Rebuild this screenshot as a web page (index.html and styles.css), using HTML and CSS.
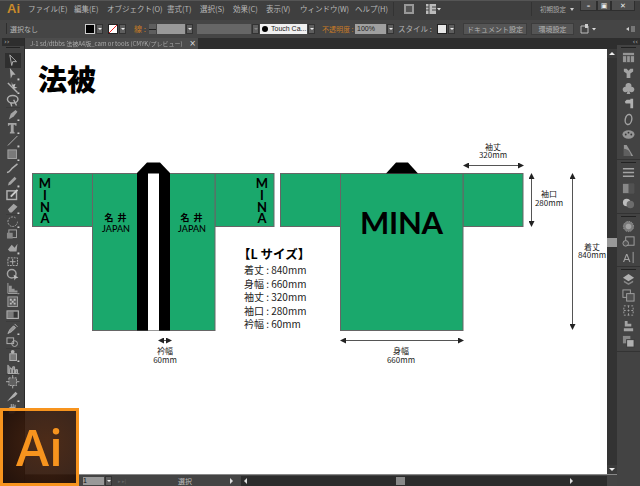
FILE: index.html
```html
<!doctype html>
<html>
    <head>
        <meta charset="utf-8">
        <title>Ai</title>
        <link rel="stylesheet" href="styles.css">
    </head>
    <body>
        <div class="app">
            <div class="menubar">
                <span class="appName">Ai</span>
                <span class="menu m1">ファイル(E)</span>
                <span class="menu m2">編集(E)</span>
                <span class="menu m3">オブジェクト(O)</span>
                <span class="menu m4">書式(T)</span>
                <span class="menu m5">選択(S)</span>
                <span class="menu m6">効果(C)</span>
                <span class="menu m7">表示(V)</span>
                <span class="menu m8">ウィンドウ(W)</span>
                <span class="menu m9">ヘルプ(H)</span>
                <span class="vline"></span>
                <svg class="barIcon" width="12" height="12" viewBox="0 0 12 12"><rect x="1" y="1" width="10" height="10" fill="#999"/><rect x="3" y="3" width="6" height="6" fill="#555"/></svg>
                <svg class="barIcon wide" width="16" height="12" viewBox="0 0 16 12"><rect x="1" y="1" width="10" height="10" fill="#bbb"/><path d="M4 1v10M1 4h3M1 7h3M7 4h4M7 7h4" stroke="#444"/><path d="M12 5h4l-2 2.500z" fill="#ddd"/></svg>
                <span class="spring"></span>
                <span class="vline"></span>
                <span class="workspace">初期設定</span>
                <span class="caret small"></span>
                <div class="winButtons">
                    <span class="winBtn">&#8211;</span>
                    <span class="winBtn restore">&#9635;</span>
                    <span class="winBtn close">&#10005;</span>
                </div>
            </div>

            <div class="controlbar">
                <span class="grip"></span>
                <span class="label none">選択なし</span>
                <span class="swatch black"></span><span class="drop"></span>
                <span class="swatch noFill"></span><span class="drop"></span>
                <span class="label orange stroke">線 :</span>
                <span class="spinner"></span>
                <span class="field strokeField"></span><span class="drop"></span>
                <span class="field dim"></span><span class="drop faded"></span>
                <span class="field brush"><i class="dot"></i>Touch Ca...</span><span class="drop"></span>
                <span class="label orange opacity">不透明度 :</span>
                <span class="field percent">100%</span><span class="drop"></span>
                <span class="label styleLabel">スタイル :</span>
                <span class="swatch pale"></span><span class="drop"></span>
                <span class="button docSetup">ドキュメント設定</span>
                <span class="button prefs">環境設定</span>
                <svg class="barIcon arrange" width="18" height="12" viewBox="0 0 18 12"><path d="M2 3h7v7H2z" fill="none" stroke="#bbb"/><path d="M6 1h3v4H6z" fill="#ccc"/><path d="M13 5h4l-2 2.500z" fill="#ddd"/></svg>
                <svg class="barIcon panelMenu" width="10" height="10" viewBox="0 0 10 10"><path d="M0 5l3-2v4z" fill="#ccc"/><path d="M5 2h4v6H5z" fill="#777"/></svg>
            </div>

            <div class="workarea">
                <div class="tools">
                    <div class="panelHead">&#8250;&#8250;</div>
                    <div class="handle"></div>
                    <div class="toolList">
                        <svg class="tool current" viewBox="0 0 14 14"><path d="M4 1l7 7H7l-1 4z" fill="none" stroke="#ccc"/></svg>
                        <svg class="tool" viewBox="0 0 14 14"><path d="M4 1l6 7H7l-2 4z" fill="#ccc"/><rect x="12" y="12" width="2" height="2" fill="#eee"/></svg>
                        <svg class="tool" viewBox="0 0 14 14"><path d="M2 2l10 10" stroke="#ccc" stroke-width="1.500"/><path d="M6 1l1 3 3-1-1 3 3 1-4 1-2-4z" fill="#ddd"/><rect x="12" y="12" width="2" height="2" fill="#eee"/></svg>
                        <svg class="tool" viewBox="0 0 14 14"><ellipse cx="7" cy="5.500" rx="5.500" ry="4" fill="none" stroke="#ccc" stroke-width="1.500"/><path d="M5 9l1 4M8 6l3 6" stroke="#ccc" stroke-width="1.500"/></svg>
                        <svg class="tool sep" viewBox="0 0 14 14"><path d="M3 12l2-6 5-4 2 2-4 5z" fill="#bbb"/><rect x="12" y="12" width="2" height="2" fill="#eee"/></svg>
                        <svg class="tool" viewBox="0 0 14 14"><path d="M2 2h9v3h-1l-1-1H8v7l1 1v1H4v-1l1-1V4H4L3 5H2z" fill="#bbb"/><rect x="12" y="12" width="2" height="2" fill="#eee"/></svg>
                        <svg class="tool" viewBox="0 0 14 14"><path d="M2 12L12 2" stroke="#ccc"/><rect x="12" y="12" width="2" height="2" fill="#eee"/></svg>
                        <svg class="tool" viewBox="0 0 14 14"><rect x="2" y="2" width="9" height="9" fill="#888" stroke="#bbb"/><rect x="12" y="12" width="2" height="2" fill="#eee"/></svg>
                        <svg class="tool" viewBox="0 0 14 14"><path d="M1 12c3 0 3-2 5-4l6-5" fill="none" stroke="#ccc" stroke-width="1.500"/></svg>
                        <svg class="tool" viewBox="0 0 14 14"><path d="M2 12l1-3 6-6 2 2-6 6z" fill="#bbb"/><rect x="12" y="12" width="2" height="2" fill="#eee"/></svg>
                        <svg class="tool" viewBox="0 0 14 14"><rect x="1" y="3" width="10" height="9" fill="none" stroke="#ccc" stroke-width="1.500"/><path d="M5 9l7-7" stroke="#eee" stroke-width="2"/></svg>
                        <svg class="tool" viewBox="0 0 14 14"><path d="M2 9l6-6 4 3-6 6H4z" fill="#bbb"/><rect x="12" y="12" width="2" height="2" fill="#eee"/></svg>
                        <svg class="tool sep" viewBox="0 0 14 14"><path d="M10 3a5 5 0 1 0 2 4" fill="none" stroke="#bbb" stroke-dasharray="2 1"/><rect x="12" y="12" width="2" height="2" fill="#eee"/></svg>
                        <svg class="tool" viewBox="0 0 14 14"><rect x="3" y="2" width="8" height="8" fill="none" stroke="#bbb"/><rect x="1" y="5" width="6" height="6" fill="#999"/></svg>
                        <svg class="tool" viewBox="0 0 14 14"><path d="M2 9l4-5 3 3 3-4-1 8H4z" fill="#bbb"/><rect x="12" y="12" width="2" height="2" fill="#eee"/></svg>
                        <svg class="tool" viewBox="0 0 14 14"><rect x="2" y="3" width="10" height="8" fill="none" stroke="#ccc" stroke-dasharray="2 1"/><path d="M7 4v6M4 7h6" stroke="#ccc"/></svg>
                        <svg class="tool" viewBox="0 0 14 14"><circle cx="6" cy="6" r="4.500" fill="none" stroke="#bbb" stroke-width="1.500"/><path d="M8 7l5 3-3 1-1 2z" fill="#ddd"/></svg>
                        <svg class="tool" viewBox="0 0 14 14"><path d="M2 1v11h10" fill="none" stroke="#bbb"/><path d="M3 4h3v7H3zM6 7h3v4H6zM9 9h3v2H9z" fill="#aaa"/><rect x="12" y="12" width="2" height="2" fill="#eee"/></svg>
                        <svg class="tool sep" viewBox="0 0 14 14"><rect x="2" y="2" width="10" height="10" fill="#666" stroke="#bbb"/><path d="M4 4h2v2H4zM8 4h2v2H8zM6 6h2v2H6zM4 8h2v2H4zM8 8h2v2H8z" fill="#ddd"/></svg>
                        <svg class="tool" viewBox="0 0 14 14"><rect x="1" y="3" width="12" height="8" fill="#888" stroke="#ccc"/><rect x="8" y="4" width="4" height="6" fill="#333"/></svg>
                        <svg class="tool sep" viewBox="0 0 14 14"><path d="M2 12l2-4 4-4 2 2-4 4zM9 2l3 3" stroke="#ccc" fill="#aaa"/><rect x="12" y="12" width="2" height="2" fill="#eee"/></svg>
                        <svg class="tool" viewBox="0 0 14 14"><rect x="1" y="3" width="7" height="6" fill="none" stroke="#ccc"/><circle cx="9" cy="9" r="3" fill="none" stroke="#ccc"/></svg>
                        <svg class="tool sep" viewBox="0 0 14 14"><rect x="4" y="5" width="7" height="7" fill="#888" stroke="#ccc"/><circle cx="7" cy="3" r="2" fill="#ccc"/><rect x="12" y="12" width="2" height="2" fill="#eee"/></svg>
                        <svg class="tool" viewBox="0 0 14 14"><path d="M2 3v9h10M4 12V7h2v5M7 12V5h2v7M10 12V8h2v4" stroke="#ccc" fill="#999"/><rect x="12" y="12" width="2" height="2" fill="#eee"/></svg>
                        <svg class="tool sep" viewBox="0 0 14 14"><rect x="3" y="3" width="8" height="8" fill="#666" stroke="#ccc" stroke-dasharray="2 1"/><path d="M7 0v3M7 11v3M0 7h3M11 7h3" stroke="#ccc"/></svg>
                        <svg class="tool" viewBox="0 0 14 14"><path d="M1 13l6-7 3-3 2 2-3 3z" fill="#ccc"/><rect x="12" y="12" width="2" height="2" fill="#eee"/></svg>
                        <svg class="tool" viewBox="0 0 14 14"><path d="M3 12V6l2-1V2h1v3h1V2h1v3h1V3h1v7l-2 2z" fill="#ccc"/></svg>
                    </div>
                </div>

                <div class="docColumn">
                    <div class="tabRow">
                        <div class="tab"><span class="tabName">J-1 sd/dtbbs 法被A4版_cam or tools (CMYK/プレビュー)</span><span class="tabClose">&#215;</span></div>
                    </div>
                    <div class="docRow">
                        <div class="canvas">
                            <svg class="art" width="582" height="426" viewBox="25 49 582 426">
                                <defs>
                                    <marker id="head" markerWidth="6" markerHeight="6" refX="5" refY="3" orient="auto-start-reverse" markerUnits="userSpaceOnUse"><path d="M0 0L6 3L0 6z" fill="#222"/></marker>
                                </defs>

                                <text class="title" x="38" y="91">法被</text>

                                <!-- front -->
                                <rect class="cloth" x="32.500" y="173.500" width="60" height="53"/>
                                <rect class="cloth" x="215" y="173.500" width="59" height="53"/>
                                <rect class="cloth" x="92.500" y="173.500" width="122.500" height="157"/>
                                <path d="M137 173L147 162.500H160L170 173V330.500H137z"/>
                                <rect x="148" y="173.500" width="11" height="157" fill="#fff"/>

                                <text class="sleeve"><tspan x="45" y="188">M</tspan><tspan x="45" y="200">I</tspan><tspan x="45" y="212">N</tspan><tspan x="45" y="223">A</tspan></text>
                                <text class="sleeve"><tspan x="262" y="188">M</tspan><tspan x="262" y="200">I</tspan><tspan x="262" y="212">N</tspan><tspan x="262" y="223">A</tspan></text>

                                <text class="name"><tspan x="116" y="221">名 井</tspan><tspan class="japan" x="116" y="232">JAPAN</tspan></text>
                                <text class="name"><tspan x="192" y="221">名 井</tspan><tspan class="japan" x="192" y="232">JAPAN</tspan></text>

                                <!-- back -->
                                <rect class="cloth" x="280.500" y="173.500" width="60" height="53"/>
                                <rect class="cloth" x="463" y="173.500" width="60" height="53"/>
                                <rect class="cloth" x="340.500" y="173.500" width="122.500" height="157"/>
                                <path d="M386 173.500L396 162.500H408L418 173.500z"/>
                                <text class="mina" x="360" y="234" textLength="83">MINA</text>

                                <!-- sizes -->
                                <text class="specHead" x="238" y="259">【L サイズ】</text>
                                <text class="spec">
                                    <tspan x="244" y="274">着丈 : 840mm</tspan>
                                    <tspan x="244" y="288">身幅 : 660mm</tspan>
                                    <tspan x="244" y="301">袖丈 : 320mm</tspan>
                                    <tspan x="244" y="315">袖口 : 280mm</tspan>
                                    <tspan x="244" y="328">衿幅 : 60mm</tspan>
                                </text>

                                <!-- dimensions -->
                                <line class="dim" x1="464" y1="165.500" x2="523" y2="165.500"/>
                                <text class="dimText"><tspan x="493" y="150">袖丈</tspan><tspan x="493" y="158">320mm</tspan></text>
                                <line class="dim" x1="531.500" y1="174" x2="531.500" y2="226"/>
                                <text class="dimText"><tspan x="549" y="197">袖口</tspan><tspan x="549" y="206">280mm</tspan></text>
                                <line class="dim" x1="572.500" y1="174" x2="572.500" y2="329"/>
                                <text class="dimText"><tspan x="592" y="250">着丈</tspan><tspan x="592" y="258">840mm</tspan></text>
                                <line class="dim" x1="341" y1="340.500" x2="463" y2="340.500"/>
                                <text class="dimText"><tspan x="401" y="354">身幅</tspan><tspan x="401" y="363">660mm</tspan></text>
                                <line class="dim" x1="159" y1="340.500" x2="171" y2="340.500"/>
                                <text class="dimText"><tspan x="165" y="354">衿幅</tspan><tspan x="165" y="363">60mm</tspan></text>
                            </svg>
                        </div>
                        <div class="vscroll">
                            <span class="scrollBtn up"></span>
                            <span class="vtrack"><i class="vthumb"></i></span>
                            <span class="scrollBtn down"></span>
                        </div>
                    </div>
                    <div class="statusbar">
                        <span class="pageField">1</span><span class="drop"></span>
                        <span class="nav">&#9656; &#9656;|</span>
                        <span class="statusText">選択</span>
                        <span class="statusArrow"></span>
                        <span class="htrack"><i class="tri left"></i><i class="hthumb"></i><i class="tri right"></i></span>
                        <span class="corner"></span>
                    </div>
                </div>

                <div class="panels">
                    <div class="panelHead right">&#8249;&#8249;</div>
                    <div class="dock first">
                        <div class="handle"></div>
                        <svg class="pIcon" viewBox="0 0 14 14"><rect x="1" y="2" width="12" height="10" fill="#aaa"/><path d="M1 5h12M5 5v7M9 5v7" stroke="#444"/></svg>
                        <svg class="pIcon" viewBox="0 0 14 14"><path d="M2 3h3l2 2 2-2h3v3l-3 2v5H5V8L2 6z" fill="#bbb"/></svg>
                        <svg class="pIcon" viewBox="0 0 14 14"><path d="M7 1a3 3 0 0 1 3 4 3 3 0 1 1-2 5l1 3H5l1-3a3 3 0 1 1-2-5 3 3 0 0 1 3-4z" fill="#bbb"/></svg>
                        <svg class="pIcon" viewBox="0 0 14 14"><path d="M9 2h3v10H9V7H4L3 5l2-2h4z" fill="#ccc"/></svg>
                        <svg class="pIcon" viewBox="0 0 14 14"><ellipse cx="7" cy="7" rx="3.500" ry="5.500" fill="none" stroke="#bbb" stroke-width="1.500" transform="rotate(12 7 7)"/></svg>
                        <svg class="pIcon" viewBox="0 0 14 14"><ellipse cx="7" cy="7" rx="6.500" ry="4.500" fill="#aaa"/><circle cx="4" cy="7" r="1" fill="#333"/><circle cx="7" cy="5" r="1" fill="#333"/><circle cx="10" cy="7" r="1" fill="#333"/></svg>
                        <svg class="pIcon" viewBox="0 0 14 14"><path d="M2 1h3l7 12H2z" fill="#aaa"/><path d="M2 5c5 0 7 4 8 8H2z" fill="#666"/></svg>
                    </div>
                    <div class="dock">
                        <div class="handle"></div>
                        <svg class="pIcon" viewBox="0 0 14 14"><path d="M1 3h12M1 7h12M1 11h12" stroke="#bbb" stroke-width="1.500"/></svg>
                        <svg class="pIcon" viewBox="0 0 14 14"><rect x="1" y="2" width="12" height="10" fill="#999"/><rect x="7" y="2" width="6" height="10" fill="#555"/></svg>
                        <svg class="pIcon" viewBox="0 0 14 14"><circle cx="5" cy="6" r="4" fill="#ddd"/><circle cx="9" cy="8" r="4" fill="#777"/></svg>
                    </div>
                    <div class="dock">
                        <div class="handle"></div>
                        <svg class="pIcon" viewBox="0 0 14 14"><circle cx="7" cy="7" r="5.500" fill="#888" stroke="#bbb" stroke-dasharray="1 1"/><circle cx="7" cy="7" r="3" fill="#bbb"/></svg>
                        <svg class="pIcon" viewBox="0 0 14 14"><rect x="4" y="2" width="9" height="9" fill="none" stroke="#bbb"/><circle cx="4" cy="9" r="3" fill="#555" stroke="#bbb"/></svg>
                        <svg class="pIcon" viewBox="0 0 14 14"><text class="pLetter" x="1" y="12">A</text><path d="M12 1v12" stroke="#bbb"/></svg>
                    </div>
                    <div class="dock">
                        <div class="handle"></div>
                        <svg class="pIcon" viewBox="0 0 14 14"><path d="M7 1l6 4-6 4-6-4z" fill="#ccc"/><path d="M2 8l5 3 5-3v2l-5 3-5-3z" fill="#999"/></svg>
                        <svg class="pIcon" viewBox="0 0 14 14"><rect x="1" y="1" width="8" height="8" fill="none" stroke="#bbb"/><rect x="5" y="5" width="8" height="8" fill="#555" stroke="#bbb"/></svg>
                        <svg class="pIcon" viewBox="0 0 14 14"><rect x="2" y="2" width="10" height="10" fill="none" stroke="#bbb" stroke-dasharray="2 2"/><path d="M7 2v10M2 7h10" stroke="#bbb" stroke-dasharray="2 2"/></svg>
                        <svg class="pIcon" viewBox="0 0 14 14"><path d="M3 1v6h7V4H6V1zM2 9h10v3H2z" fill="#bbb"/></svg>
                        <svg class="pIcon" viewBox="0 0 14 14"><rect x="1" y="1" width="8" height="8" fill="#999"/><rect x="5" y="5" width="8" height="8" fill="#ccc" stroke="#333"/></svg>
                    </div>
                    <div class="dock last"></div>
                </div>
            </div>
        </div>

        <div class="badge"><span>Ai</span></div>
    </body>
</html>
```

FILE: styles.css
```css
body {
    margin: 0;
    background-color: #3a3a3a;
    font-family: "Noto Sans CJK JP", "Liberation Sans", sans-serif;
    color: #ccc;
}

i {
    font-style: normal;
}

div.app {
    display: flex;
    flex-direction: column;
    width: 640px;
    height: 486px;
    overflow: hidden;
}

/* menu bar */
div.menubar {
    display: flex;
    align-items: center;
    height: 20px;
    padding-bottom: 3px;
    background-color: #3f3f3f;
    border-top: 1px solid #555;
    box-sizing: border-box;
    font-size: 7.5px;
    white-space: nowrap;
}

span.appName {
    width: 28px;
    padding-left: 7px;
    box-sizing: border-box;
    font-family: "Liberation Sans", sans-serif;
    font-size: 13px;
    font-weight: bold;
    color: #c98a2b;
}

span.menu {
    color: #b8b8b8;
}

span.m1 { width: 46px; }
span.m2 { width: 33px; }
span.m3 { width: 60px; }
span.m4 { width: 33px; }
span.m5 { width: 33px; }
span.m6 { width: 33px; }
span.m7 { width: 34px; }
span.m8 { width: 55px; }
span.m9 { width: 38px; }

span.vline {
    flex: none;
    width: 1px;
    height: 14px;
    background-color: #333;
}

svg.barIcon {
    flex: none;
    margin-left: 9px;
}

svg.barIcon.wide {
    margin-left: 10px;
}

span.spring {
    flex-grow: 1;
}

span.workspace {
    margin-left: 8px;
    font-size: 6.500px;
    color: #aaa;
}

span.caret.small {
    width: 0;
    height: 0;
    margin: 3px 0 0 4px;
    border: 2px solid transparent;
    border-top: 3px solid #ccc;
}

div.winButtons {
    display: flex;
    flex: none;
    align-self: flex-start;
    margin: 0 5px 0 6px;
}

span.winBtn {
    display: flex;
    align-items: center;
    justify-content: center;
    width: 17px;
    height: 10px;
    box-sizing: border-box;
    background-color: #4f4f4f;
    border: 1px solid #2e2e2e;
    border-top: 0;
    font-family: "DejaVu Sans", sans-serif;
    font-size: 7px;
    font-weight: bold;
    color: #eee;
}

span.winBtn.restore {
    width: 14px;
}

span.winBtn.close {
    width: 24px;
}

/* control bar */
div.controlbar {
    display: flex;
    align-items: center;
    height: 18px;
    background-color: #454545;
    font-size: 8px;
    white-space: nowrap;
}

span.grip {
    width: 1px;
    height: 11px;
    margin: 0 3px 0 6px;
    background-color: #2e2e2e;
}

span.label {
    color: #b4b4b4;
}

span.label.orange {
    color: #c77b25;
}

span.label.none {
    width: 75px;
    font-size: 7px;
}

span.swatch {
    flex: none;
    width: 10px;
    height: 10px;
    border: 1px solid #222;
    box-sizing: border-box;
}

span.swatch.black {
    background-color: #000;
    border-color: #ccc;
}

span.swatch.noFill {
    margin-left: 5px;
    background: linear-gradient(135deg, #fff 45%, #e22 45%, #e22 55%, #fff 55%);
}

span.swatch.pale {
    background-color: #e6e6e6;
    margin-left: 4px;
}

span.drop {
    flex: none;
    display: flex;
    align-items: center;
    justify-content: center;
    width: 7px;
    height: 10px;
    margin-left: 1px;
    background-color: #5e5e5e;
    border: 1px solid #333;
    box-sizing: border-box;
}

span.drop::after {
    content: "";
    width: 0;
    height: 0;
    margin-top: 2px;
    border: 2px solid transparent;
    border-top: 2px solid #eee;
}

span.drop.faded::after {
    border-top-color: #888;
}

span.label.stroke {
    width: 15px;
    margin-left: 8px;
}

span.spinner {
    width: 7px;
    height: 10px;
    background: linear-gradient(#5e5e5e 45%, #222 45%, #222 55%, #5e5e5e 55%);
}

span.field {
    flex: none;
    height: 10px;
    line-height: 10px;
    box-sizing: border-box;
    overflow: hidden;
}

span.field.strokeField {
    width: 28px;
    margin-left: 1px;
    background-color: #999;
}

span.field.dim {
    width: 54px;
    margin-left: 4px;
    background-color: #666;
}

span.field.brush {
    display: flex;
    align-items: center;
    width: 47px;
    margin-left: 1px;
    background-color: #f0f0f0;
    color: #222;
    font-family: "Liberation Sans", sans-serif;
    font-size: 7px;
}

i.dot {
    flex: none;
    width: 6px;
    height: 6px;
    margin: 0 3px 0 2px;
    border-radius: 50%;
    background-color: #000;
}

span.label.opacity {
    width: 33px;
    margin-left: 7px;
    font-size: 7px;
}

span.field.percent {
    width: 31px;
    padding-left: 2px;
    background-color: #a0a0a0;
    color: #222;
    font-family: "Liberation Sans", sans-serif;
    font-size: 7px;
}

span.label.styleLabel {
    width: 35px;
    margin-left: 4px;
    font-size: 7.5px;
}

span.button {
    flex: none;
    height: 10px;
    line-height: 10px;
    background-color: #555;
    border: 1px solid #3c3c3c;
    text-align: center;
    font-size: 7px;
    color: #b4b4b4;
}

span.button.docSetup {
    width: 62px;
    margin-left: 8px;
}

span.button.prefs {
    width: 41px;
    margin-left: 4px;
}

svg.barIcon.arrange {
    margin-left: 5px;
}

svg.barIcon.panelMenu {
    margin-left: 29px;
}

/* work area */
div.workarea {
    display: flex;
    flex-grow: 1;
    min-height: 0;
}

div.tools {
    flex: none;
    width: 25px;
    padding-left: 2px;
    box-sizing: border-box;
    background-color: #434343;
    border-right: 1px solid #2a2a2a;
}

div.panelHead {
    height: 8px;
    line-height: 8px;
    padding-left: 2px;
    background-color: #2e2e2e;
    font-family: "DejaVu Sans", sans-serif;
    font-size: 7px;
    color: #aaa;
}

div.panelHead.right {
    height: 7px;
    padding-right: 2px;
    text-align: right;
}

div.handle {
    height: 1px;
    margin: 1px 4px 6px;
    background-color: #222;
}

div.toolList {
    display: flex;
    flex-direction: column;
    align-items: center;
}

svg.tool {
    flex: none;
    width: 13.400px;
    height: 13.400px;
    opacity: 0.8;
    filter: blur(0.3px);
}

svg.tool.current {
    background-color: #2b2b2b;
    outline: 1px solid #2b2b2b;
}

svg.tool.sep {
    box-shadow: 0 -1px 0 #3a3a3a;
}

div.docColumn {
    display: flex;
    flex-direction: column;
    flex-grow: 1;
    min-width: 0;
}

div.tabRow {
    flex: none;
    height: 11px;
    background-color: #2e2e2e;
}

div.tab {
    display: flex;
    align-items: center;
    justify-content: space-between;
    width: 173px;
    height: 11px;
    padding: 0 2px 0 5px;
    box-sizing: border-box;
    background-color: #4c4c4c;
    font-size: 6px;
    white-space: nowrap;
    overflow: hidden;
    color: #aaa;
}

span.tabName {
    overflow: hidden;
    filter: blur(0.4px);
}

span.tabClose {
    font-family: "DejaVu Sans", sans-serif;
    font-size: 8px;
    color: #ddd;
}

div.docRow {
    display: flex;
    flex-grow: 1;
    min-height: 0;
}

div.canvas {
    flex-grow: 1;
    background-color: #fff;
    overflow: hidden;
}

svg.art {
    display: block;
}

rect.cloth {
    fill: #1aa86c;
    stroke: #666;
    stroke-width: 1;
}

text.title {
    font-size: 29px;
    font-weight: 900;
    fill: #000;
}

text.sleeve {
    font-family: Lato, sans-serif;
    font-size: 13px;
    font-weight: 700;
    text-anchor: middle;
}

text.name {
    font-size: 9px;
    font-weight: 700;
    letter-spacing: 1px;
    text-anchor: middle;
}

tspan.japan {
    font-family: Lato, sans-serif;
    font-weight: 500;
    letter-spacing: 0;
}

text.mina {
    font-family: Lato, sans-serif;
    font-size: 31px;
    font-weight: 700;
}

text.specHead {
    font-size: 12.500px;
    font-weight: 700;
}

text.spec {
    font-size: 10px;
    fill: #222;
}

text.dimText {
    font-size: 8px;
    fill: #222;
    text-anchor: middle;
}

line.dim {
    stroke: #555;
    stroke-width: 1;
    marker-start: url(#head);
    marker-end: url(#head);
}

div.vscroll {
    display: flex;
    flex-direction: column;
    flex: none;
    width: 10px;
    background-color: #3a3a3a;
}

span.scrollBtn {
    flex: none;
    display: flex;
    align-items: center;
    justify-content: center;
    height: 9px;
}

span.scrollBtn::after {
    content: "";
    width: 0;
    height: 0;
    border: 3px solid transparent;
}

span.scrollBtn.up::after {
    margin-bottom: 3px;
    border-bottom: 3px solid #eee;
}

span.scrollBtn.down::after {
    margin-top: 3px;
    border-top: 3px solid #eee;
}

span.vtrack {
    flex-grow: 1;
    padding-top: 180px;
    background-color: #333;
}

i.vthumb {
    display: block;
    height: 9px;
    background-color: #999;
}

div.statusbar {
    flex: none;
    display: flex;
    align-items: center;
    height: 12px;
    background-color: #444;
    border-top: 1px solid #888;
    box-sizing: border-box;
    font-size: 7px;
}

span.pageField {
    flex: none;
    width: 21px;
    height: 8px;
    margin-left: 58px;
    line-height: 8px;
    background-color: #999;
    color: #111;
    font-family: "Liberation Sans", sans-serif;
}

span.nav {
    width: 60px;
    margin-left: 6px;
    color: #666;
    font-family: "DejaVu Sans", sans-serif;
    font-size: 5px;
}

span.statusText {
    width: 52px;
    color: #bbb;
}

span.statusArrow {
    width: 0;
    height: 0;
    border: 3px solid transparent;
    border-left: 3px solid #ddd;
    margin-right: 3px;
}

span.htrack {
    display: flex;
    align-items: center;
    flex-grow: 1;
    height: 10px;
    margin-left: 2px;
    background-color: #2c2c2c;
}

i.tri {
    width: 0;
    height: 0;
    border: 3px solid transparent;
}

i.tri.left {
    border-right: 3px solid #ddd;
    margin-right: 149px;
}

i.tri.right {
    border-left: 3px solid #ddd;
    margin-left: 165px;
}

i.hthumb {
    width: 9px;
    height: 8px;
    background-color: #888;
}

span.corner {
    flex: none;
    width: 10px;
    height: 10px;
    background-color: #444;
}

/* right dock */
div.panels {
    display: flex;
    flex-direction: column;
    flex: none;
    width: 23px;
    background-color: #434343;
}

div.dock {
    display: flex;
    flex-direction: column;
    align-items: center;
    border-bottom: 1px solid #333;
}

div.dock .handle {
    align-self: stretch;
    margin: 2px 4px 3px;
}

div.dock.last {
    flex-grow: 1;
    border-bottom: 0;
}

svg.pIcon {
    flex: none;
    width: 13px;
    height: 13px;
    margin-bottom: 2.500px;
    opacity: 0.8;
    filter: blur(0.3px);
}

text.pLetter {
    font-family: "Liberation Sans", sans-serif;
    font-size: 12px;
    fill: #bbb;
}

/* logo over the corner of the window */
div.badge {
    position: absolute;
    left: 0;
    top: 408px;
    display: flex;
    align-items: center;
    justify-content: center;
    width: 79px;
    height: 78px;
    box-sizing: border-box;
    border: 3px solid #f7941e;
    background: radial-gradient(circle at 60% 45%, rgba(70, 35, 15, 0.96), rgba(30, 12, 5, 0.9));
    font-family: "Open Sans", "Liberation Sans", sans-serif;
    font-size: 50px;
    font-weight: 600;
    line-height: 1;
    color: #f7941e;
}
```
